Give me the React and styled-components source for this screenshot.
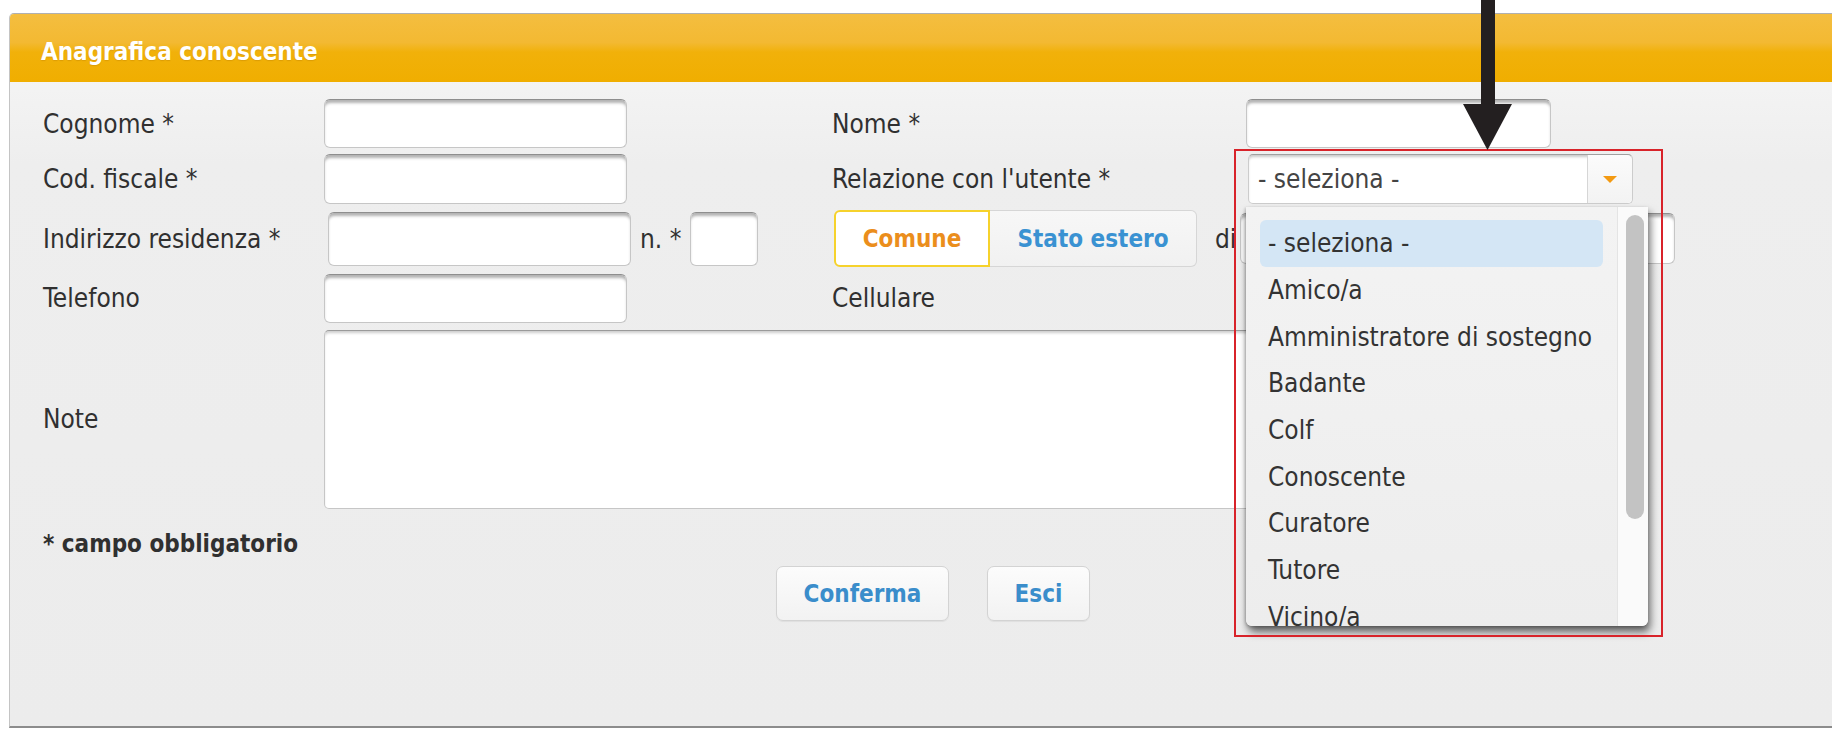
import React from "react";
import styled, { createGlobalStyle } from "styled-components";

const GlobalStyle = createGlobalStyle`
  html, body {
    margin: 0;
    padding: 0;
    background: #ffffff;
    overflow: hidden;
  }
  body {
    font-family: "DejaVu Sans Condensed", "DejaVu Sans", sans-serif;
    font-stretch: semi-condensed;
    color: #333333;
  }
  * { box-sizing: border-box; }
`;

const Page = styled.div`
  width: 1832px;
  height: 729px;
  overflow: hidden;
  padding: 13px 0 0 9px;
`;

const Panel = styled.section`
  width: 1848px;
  height: 715px;
  border: 1px solid #b0b0b0;
  border-left-color: #c4c4c4;
  border-bottom: 2px solid #8c8c8c;
  border-radius: 5px 5px 0 0;
  background: linear-gradient(#f8f8f8 0px, #eeeeee 150px, #ececec 100%);
  display: flex;
  flex-direction: column;
`;

const Header = styled.header`
  height: 68px;
  display: flex;
  align-items: center;
  padding: 8px 0 0 31px;
  border-radius: 4px 4px 0 0;
  background: linear-gradient(
    180deg,
    #f4be40 0%,
    #f3b932 42%,
    #f1b10a 56%,
    #f0ae00 100%
  );
  color: #ffffff;
  font-weight: bold;
  font-size: 24px;
  text-shadow: 0 1px 1px rgba(160, 100, 0, 0.25);
`;

const FormGrid = styled.div`
  display: grid;
  grid-template-columns: 281px 508px 414px 600px;
  grid-template-rows: 49px 50px 57px 50px 180px;
  row-gap: 6px;
  padding: 17px 0 0 33px;
  align-items: center;
`;

const Label = styled.label`
  font-size: 26px;
  color: #303030;
  white-space: nowrap;
`;

const Field = styled.div`
  display: flex;
  align-items: center;
  height: 100%;
  position: relative;
  z-index: ${(p) => p.$z || "auto"};
  grid-column: ${(p) => p.$span || "auto"};
`;

const TextInput = styled.div`
  width: ${(p) => p.$w}px;
  height: ${(p) => p.$h || 49}px;
  margin-left: ${(p) => p.$ml || 0}px;
  flex: none;
  background: #ffffff;
  border: 1px solid #c6c6c6;
  border-top-color: #8e8e8e;
  border-radius: 6px;
  box-shadow: inset 0 4px 3px -1px rgba(0, 0, 0, 0.3);
`;

const InlineLabel = styled.span`
  font-size: 26px;
  color: #303030;
  margin: 0 ${(p) => p.$mr || 9}px 0 ${(p) => p.$ml || 9}px;
  white-space: nowrap;
`;

const Toggle = styled.div`
  display: flex;
  height: 57px;
  margin-left: 2px;
`;

const ToggleOption = styled.button`
  font-family: inherit;
  font-stretch: inherit;
  font-size: 24px;
  font-weight: bold;
  width: ${(p) => p.$w}px;
  height: 100%;
  padding: 0;
  cursor: pointer;
  color: ${(p) => (p.$active ? "#eb8e1c" : "#3a92d2")};
  background: ${(p) => (p.$active ? "#ffffff" : "linear-gradient(#f7f7f7, #f1f1f1)")};
  border: ${(p) => (p.$active ? "2px solid #f6d22c" : "1px solid #d6d6d6")};
  border-left-width: ${(p) => (p.$active ? "2px" : "0")};
  border-radius: ${(p) => (p.$active ? "6px 0 0 6px" : "0 6px 6px 0")};
`;

const SelectBox = styled.div`
  display: flex;
  width: 385px;
  height: 50px;
  margin-left: 2px;
  background: #ffffff;
  border: 1px solid #cccccc;
  border-top-color: #a0a0a0;
  border-radius: 5px;
  box-shadow: inset 0 3px 3px -1px rgba(0, 0, 0, 0.22);
`;

const SelectValue = styled.div`
  flex: 1;
  display: flex;
  align-items: center;
  padding-left: 9px;
  font-size: 26px;
  color: #444444;
`;

const SelectArrow = styled.div`
  width: 45px;
  display: flex;
  align-items: center;
  justify-content: center;
  border-left: 1px solid #d6d6d6;
  background: linear-gradient(#fbfbfb, #f3f3f3);
  border-radius: 0 5px 5px 0;
`;

const Caret = styled.span`
  width: 0;
  height: 0;
  border-left: 7px solid transparent;
  border-right: 7px solid transparent;
  border-top: 7px solid #f39a12;
`;

const Dropdown = styled.div`
  position: absolute;
  top: calc(100% + 3px);
  left: 0;
  width: 402px;
  height: 419px;
  display: flex;
  background: #efefef;
  border-radius: 0 0 6px 6px;
  box-shadow: 2px 6px 8px rgba(0, 0, 0, 0.6), -1px 1px 3px rgba(0, 0, 0, 0.2);
  overflow: hidden;
`;

const OptionList = styled.ul`
  flex: 1;
  list-style: none;
  margin: 0;
  padding: 13px 14px 0 14px;
  overflow: hidden;
  background: linear-gradient(#f3f3f3, #ededed);
`;

const OptionItem = styled.li`
  height: 46.7px;
  display: flex;
  align-items: center;
  padding-left: 8px;
  font-size: 26px;
  color: #333333;
  white-space: nowrap;
  border-radius: 6px;
  background: ${(p) => (p.$selected ? "#d4e6f5" : "transparent")};
`;

const ScrollTrack = styled.div`
  width: 31px;
  flex: none;
  padding: 8px 5px 0 8px;
  background: #fafafa;
  border-left: 1px solid #e4e4e4;
`;

const ScrollThumb = styled.div`
  width: 18px;
  height: 304px;
  border-radius: 9px;
  background: #c3c3c3;
`;

const Callout = styled.div`
  position: absolute;
  left: -12px;
  top: -5px;
  width: 429px;
  height: 488px;
  border: 2px solid #d8232a;
  pointer-events: none;
`;

const Pointer = styled.svg`
  position: absolute;
  left: 217px;
  top: -155px;
  width: 49px;
  height: 151px;
  pointer-events: none;
`;

const TextArea = styled.div`
  width: 1227px;
  height: 179px;
  background: #ffffff;
  border: 1px solid #c6c6c6;
  border-top-color: #9a9a9a;
  border-radius: 5px;
  box-shadow: inset 0 3px 3px -1px rgba(0, 0, 0, 0.2);
`;

const RequiredNote = styled.p`
  margin: 20px 0 0 33px;
  font-size: 24px;
  font-weight: bold;
  line-height: 30px;
  color: #303030;
`;

const ButtonRow = styled.div`
  display: flex;
  justify-content: center;
  gap: 38px;
  margin-top: 7px;
`;

const ActionButton = styled.button`
  font-family: inherit;
  font-stretch: inherit;
  font-size: 24px;
  font-weight: bold;
  color: #3a8dcb;
  height: 55px;
  width: ${(p) => p.$w}px;
  padding: 0;
  background: linear-gradient(#fcfcfc, #f2f2f2);
  border: 1px solid #d3d3d3;
  border-radius: 7px;
  box-shadow: 0 1px 1px rgba(0, 0, 0, 0.06);
  cursor: pointer;
`;

const relations = [
  "- seleziona -",
  "Amico/a",
  "Amministratore di sostegno",
  "Badante",
  "Colf",
  "Conoscente",
  "Curatore",
  "Tutore",
  "Vicino/a",
];

export default function App() {
  return (
    <>
      <GlobalStyle />
      <Page>
        <Panel>
          <Header>Anagrafica conoscente</Header>
          <FormGrid>
            <Label>Cognome *</Label>
            <Field>
              <TextInput $w={303} />
            </Field>
            <Label>Nome *</Label>
            <Field>
              <TextInput $w={305} />
            </Field>

            <Label>Cod. fiscale *</Label>
            <Field>
              <TextInput $w={303} $h={50} />
            </Field>
            <Label>Relazione con l'utente *</Label>
            <Field $z={10}>
              <SelectBox>
                <SelectValue>- seleziona -</SelectValue>
                <SelectArrow>
                  <Caret />
                </SelectArrow>
              </SelectBox>
              <Dropdown>
                <OptionList>
                  {relations.map((r, i) => (
                    <OptionItem key={r} $selected={i === 0}>
                      {r}
                    </OptionItem>
                  ))}
                </OptionList>
                <ScrollTrack>
                  <ScrollThumb />
                </ScrollTrack>
              </Dropdown>
              <Callout />
              <Pointer viewBox="0 0 49 151">
                <rect x="18" y="0" width="14" height="107" fill="#231f20" />
                <polygon points="0,105 49,105 24.5,151" fill="#231f20" />
              </Pointer>
            </Field>

            <Label>Indirizzo residenza *</Label>
            <Field>
              <TextInput $w={303} $h={54} $ml={4} />
              <InlineLabel>n. *</InlineLabel>
              <TextInput $w={68} $h={54} />
            </Field>
            <Field>
              <Toggle>
                <ToggleOption $active $w={156}>Comune</ToggleOption>
                <ToggleOption $w={207}>Stato estero</ToggleOption>
              </Toggle>
              <InlineLabel $ml={18}>di</InlineLabel>
            </Field>
            <Field>
              <TextInput $w={435} $h={51} $ml={-6} />
            </Field>

            <Label>Telefono</Label>
            <Field>
              <TextInput $w={303} />
            </Field>
            <Label>Cellulare</Label>
            <Field>
              <TextInput $w={305} />
            </Field>

            <Label>Note</Label>
            <Field $span="2 / span 3">
              <TextArea />
            </Field>
          </FormGrid>
          <RequiredNote>* campo obbligatorio</RequiredNote>
          <ButtonRow>
            <ActionButton $w={173}>Conferma</ActionButton>
            <ActionButton $w={103}>Esci</ActionButton>
          </ButtonRow>
        </Panel>
      </Page>
    </>
  );
}
